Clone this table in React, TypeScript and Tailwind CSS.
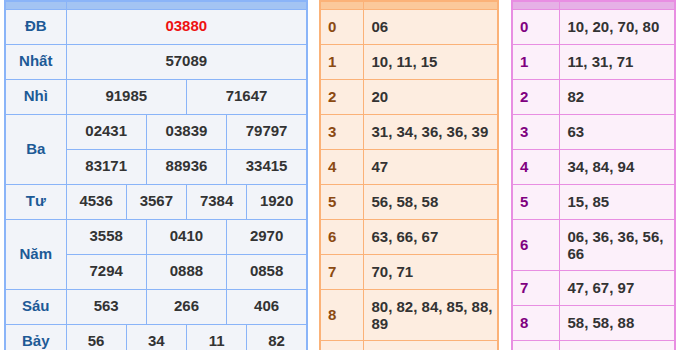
const prizes: { label: string; rows: string[][]; red?: boolean }[] = [
    { label: "ĐB", rows: [["03880"]], red: true },
    { label: "Nhất", rows: [["57089"]] },
    { label: "Nhì", rows: [["91985", "71647"]] },
    { label: "Ba", rows: [["02431", "03839", "79797"], ["83171", "88936", "33415"]] },
    { label: "Tư", rows: [["4536", "3567", "7384", "1920"]] },
    { label: "Năm", rows: [["3558", "0410", "2970"], ["7294", "0888", "0858"]] },
    { label: "Sáu", rows: [["563", "266", "406"]] },
    { label: "Bảy", rows: [["56", "34", "11", "82"]] },
];

const heads = [
    "06", "10, 11, 15", "20", "31, 34, 36, 36, 39", "47",
    "56, 58, 58", "63, 66, 67", "70, 71", "80, 82, 84, 85, 88, 89",
];

const tails = [
    "10, 20, 70, 80", "11, 31, 71", "82", "63", "34, 84, 94",
    "15, 85", "06, 36, 36, 56, 66", "47, 67, 97", "58, 58, 88",
];

// colspan for a row split in n parts (12 sub columns)
const spanFor = (n: number) => (n === 1 ? 12 : n === 2 ? 6 : n === 3 ? 4 : 3);

const PrizeTable = () => (
    <table className="w-[304px] table-fixed border-collapse border-2 border-[#8ab4f8] bg-[#f2f4f9] text-[15px] font-bold">
        <colgroup>
            <col className="w-[61px]" />
            {Array.from({ length: 12 }).map((_, i) => (
                <col key={i} />
            ))}
        </colgroup>
        <tbody>
            <tr className="h-[8px] bg-[#a3c4f3]">
                <td className="border border-[#8ab4f8] p-0"></td>
                <td colSpan={12} className="border border-[#8ab4f8] p-0"></td>
            </tr>
            {prizes.map((p) =>
                p.rows.map((r, ri) => (
                    <tr key={p.label + ri} className="h-[35px]">
                        {ri === 0 && (
                            <td rowSpan={p.rows.length} className="border border-[#8ab4f8] p-0 text-center text-[#1d5a96]">
                                {p.label}
                            </td>
                        )}
                        {r.map((n, ni) => (
                            <td
                                key={ni}
                                colSpan={spanFor(r.length)}
                                className={`border border-[#8ab4f8] p-0 text-center ${p.red ? "text-[#ee1111]" : "text-[#333333]"}`}
                            >
                                {n}
                            </td>
                        ))}
                    </tr>
                ))
            )}
        </tbody>
    </table>
);

type LotoProps = {
    data: string[];
    width: string;
    firstCol: string;
    tone: "orange" | "purple";
};

const LotoTable = ({ data, width, firstCol, tone }: LotoProps) => {
    const orange = tone === "orange";
    const border = orange ? "border-[#fbb278]" : "border-[#e88ee2]";
    return (
        <table className={`${width} table-fixed border-collapse border-2 ${border} ${orange ? "bg-[#fdede0]" : "bg-[#fcf0fa]"} text-[15px] font-bold leading-[17px]`}>
            <colgroup>
                <col className={firstCol} />
                <col />
            </colgroup>
            <tbody>
                <tr className={`h-[8px] ${orange ? "bg-[#fbc99b]" : "bg-[#e6b1e6]"}`}>
                    <td className={`border ${border} p-0`}></td>
                    <td className={`border ${border} p-0`}></td>
                </tr>
                {data.map((d, i) => (
                    <tr key={i} className="h-[35px]">
                        <td className={`border ${border} py-[8px] pl-[7px] ${orange ? "text-[#8b4a12]" : "text-[#800080]"}`}>{i}</td>
                        <td className={`border ${border} py-[8px] pl-[8px] pr-[4px] text-[#333333]`}>{d}</td>
                    </tr>
                ))}
                {/* next row, mostly below the fold */}
                <tr className="h-[35px]">
                    <td className={`border ${border} p-0`}></td>
                    <td className={`border ${border} p-0`}></td>
                </tr>
            </tbody>
        </table>
    );
};

export default function App() {
    return (
        <div className="flex h-[350px] w-[680px] items-start overflow-hidden bg-white px-[4px]" style={{ fontFamily: '"Liberation Sans", Arial, sans-serif' }}>
            <PrizeTable />
            <div className="ml-[11px]">
                <LotoTable data={heads} width="w-[180px]" firstCol="w-[43px]" tone="orange" />
            </div>
            <div className="ml-[12px]">
                <LotoTable data={tails} width="w-[165px]" firstCol="w-[47px]" tone="purple" />
            </div>
        </div>
    );
}
